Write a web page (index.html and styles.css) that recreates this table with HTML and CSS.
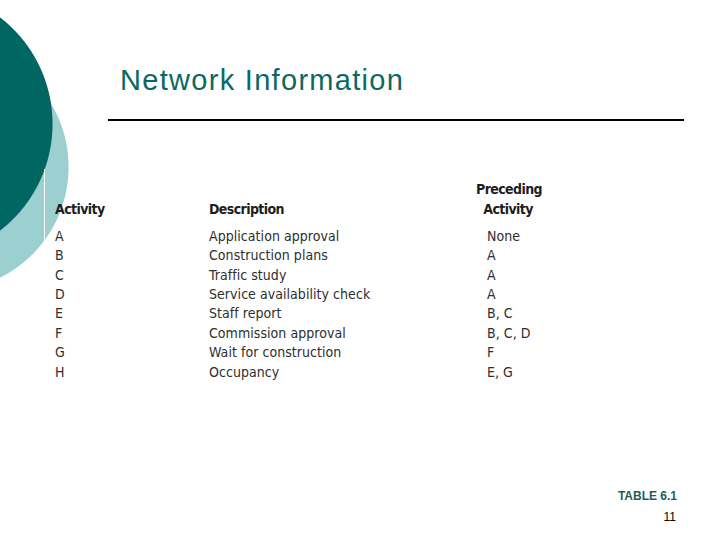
FILE: index.html
```html
<!DOCTYPE html>
<html lang="en">
<head>
<meta charset="utf-8">
<title>Network Information</title>
<link rel="stylesheet" href="styles.css">
</head>
<body>
<main class="slide">
  <h1 class="title">Network Information</h1>
  <div class="rule"></div>
  <section class="table">
    <div class="th col1">Activity</div>
    <div class="th col2">Description</div>
    <div class="th col3">Preceding<br>Activity</div>

    <div class="td col1">A</div><div class="td col2">Application approval</div><div class="td col3">None</div>
    <div class="td col1">B</div><div class="td col2">Construction plans</div><div class="td col3">A</div>
    <div class="td col1">C</div><div class="td col2">Traffic study</div><div class="td col3">A</div>
    <div class="td col1">D</div><div class="td col2">Service availability check</div><div class="td col3">A</div>
    <div class="td col1">E</div><div class="td col2">Staff report</div><div class="td col3">B, C</div>
    <div class="td col1">F</div><div class="td col2">Commission approval</div><div class="td col3">B, C, D</div>
    <div class="td col1">G</div><div class="td col2">Wait for construction</div><div class="td col3">F</div>
    <div class="td col1">H</div><div class="td col2">Occupancy</div><div class="td col3">E, G</div>
  </section>
  <footer class="footer">
    <div class="caption">TABLE 6.1</div>
    <div class="page">11</div>
  </footer>
</main>
</body>
</html>
```
FILE: styles.css
```css
html, body {
  margin: 0;
  padding: 0;
}
body {
  width: 720px;
  height: 540px;
  overflow: hidden;
  background-color: #ffffff;
  background-image:
    radial-gradient(circle 135px at -82px 124px, #006661 99.3%, rgba(0,102,97,0) 100%),
    radial-gradient(circle 124px at -55px 167px, #9ccfcf 99.3%, rgba(156,207,207,0) 100%);
  background-repeat: no-repeat;
  font-family: "Liberation Sans", Arial, sans-serif;
}
.slide {
  width: 720px;
  height: 540px;
  display: flex;
  flex-direction: column;
  position: relative;
}
.title {
  margin: 64px 0 0 120px;
  font-family: "Liberation Sans", Arial, sans-serif;
  font-weight: normal;
  font-size: 29px;
  line-height: 33px;
  letter-spacing: 1.3px;
  color: #0c6962;
}
.rule {
  margin: 22px 0 0 108px;
  width: 576px;
  height: 2px;
  background: #000000;
}
.table {
  position: relative;
  margin: 67px 0 0 55px;
  display: grid;
  grid-template-columns: 154px 267px 80px;
  grid-auto-rows: 19.4px;
  font-family: "DejaVu Sans Condensed", "Liberation Sans", Arial, sans-serif;
  font-size: 14px;
  line-height: 19.4px;
  color: #2e2e2e;
}
.table::before {
  content: "";
  position: absolute;
  left: -11px;
  top: -19px;
  width: 1px;
  height: 80px;
  background: #ffffff;
}
.th {
  font-weight: bold;
  letter-spacing: -0.6px;
  color: #1e1e1e;
  grid-row: 1 / span 2;
  align-self: end;
  margin-bottom: 7.6px;
}
.th.col3 {
  text-align: center;
  width: 64px;
}
.td {
  letter-spacing: 0.05px;
  white-space: nowrap;
}
.td.col3 {
  padding-left: 11px;
}
.footer {
  margin-top: auto;
  margin-bottom: 12px;
  padding-right: 43px;
  display: flex;
  flex-direction: column;
  align-items: flex-end;
  font-family: "Liberation Sans", Arial, sans-serif;
  font-size: 12px;
  line-height: 21px;
}
.caption {
  font-weight: bold;
  color: #1f5c5c;
}
.page {
  color: #000000;
  padding-right: 1px;
}
```
